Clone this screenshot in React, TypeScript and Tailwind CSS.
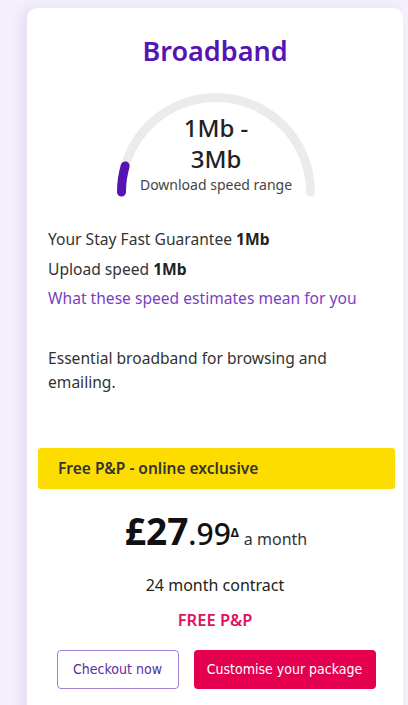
export default function App() {
  return (
    <div
      className="min-h-[705px] overflow-hidden bg-[#f4f0fb] pl-[27px] pr-[5px] pt-[8px]"
      style={{ fontFamily: '"Noto Sans", Lato, sans-serif' }}
    >
      <div className="h-[720px] rounded-[10px] bg-white shadow-[-6px_0_14px_rgba(120,80,200,0.12)]">
        {/* Title */}
        <h1 className="pt-[27px] text-center text-[27px] leading-[32px] font-semibold text-[#5514b4]">
          Broadband
        </h1>

        {/* Gauge */}
        <div className="relative mx-auto mt-[26px] h-[104px] w-[200px] translate-x-[1px]">
          <svg className="absolute inset-0" width="200" height="104" viewBox="0 0 200 104">
            <path
              d="M5.5 99 A94.5 94.5 0 0 1 194.5 99"
              fill="none"
              stroke="#ebebeb"
              strokeWidth="9"
              strokeLinecap="round"
            />
            <path
              d="M5.5 99 A94.5 94.5 0 0 1 9.16 72.95"
              fill="none"
              stroke="#5514b4"
              strokeWidth="9"
              strokeLinecap="round"
            />
          </svg>
          <div className="relative flex flex-col items-center pt-[19px]">
            <span className="text-[24px] leading-[32px] font-medium text-[#222]">1Mb -</span>
            <span className="text-[24px] leading-[30px] font-medium text-[#222]">3Mb</span>
            <span className="mt-[2px] whitespace-nowrap text-[14px] leading-[18px] text-[#444]">Download speed range</span>
          </div>
        </div>

        {/* Speeds */}
        <div className="mt-[27px] pl-[21px] text-[15.6px] text-[#333]">
          <p className="leading-[30px]">
            Your Stay Fast Guarantee <span className="font-bold text-[#222]">1Mb</span>
          </p>
          <p className="leading-[30px]">
            Upload speed <span className="font-bold text-[#222]">1Mb</span>
          </p>
          <p className="leading-[28px] text-[#7a3fbf]">What these speed estimates mean for you</p>
          <p className="mt-[34px] pr-[24px] leading-[24px]">
            Essential broadband for browsing and emailing.
          </p>
        </div>

        {/* Banner */}
        <div className="mt-[54px] ml-[11px] mr-[8px] flex h-[41px] items-center rounded-[3px] bg-[#fddc00] pl-[20px]">
          <span className="text-[15.5px] font-semibold text-[#333]">Free P&amp;P - online exclusive</span>
        </div>

        {/* Price */}
        <div className="mt-[20px] flex items-baseline justify-center pl-[2px] text-[#111]">
          <span className="text-[37px] leading-[44px] font-bold">£27</span>
          <span className="text-[30px] leading-[44px] font-medium">.99</span>
          <span className="mb-[17px] self-end text-[12px] font-bold leading-[12px]">Δ</span>
          <span className="ml-[5px] text-[16px] text-[#333]">a month</span>
        </div>

        <p className="mt-[19px] text-center text-[16px] leading-[20px] text-[#222]">24 month contract</p>
        <p className="mt-[15px] text-center text-[16.5px] leading-[20px] font-semibold text-[#e0115f]">FREE P&amp;P</p>

        {/* Buttons */}
        <div
          className="mt-[20px] flex justify-center gap-[15px] pl-[2px]"
          style={{ fontFamily: '"DejaVu Sans Condensed", "Liberation Sans Narrow", sans-serif' }}
        >
          <button className="h-[39px] w-[122px] rounded-[4px] border border-[#a57fd0] bg-white text-[14px] text-[#5a2ca0]">
            Checkout now
          </button>
          <button className="h-[39px] w-[182px] rounded-[4px] bg-[#e4004f] text-[14px] text-white">
            Customise your package
          </button>
        </div>
      </div>
    </div>
  );
}
